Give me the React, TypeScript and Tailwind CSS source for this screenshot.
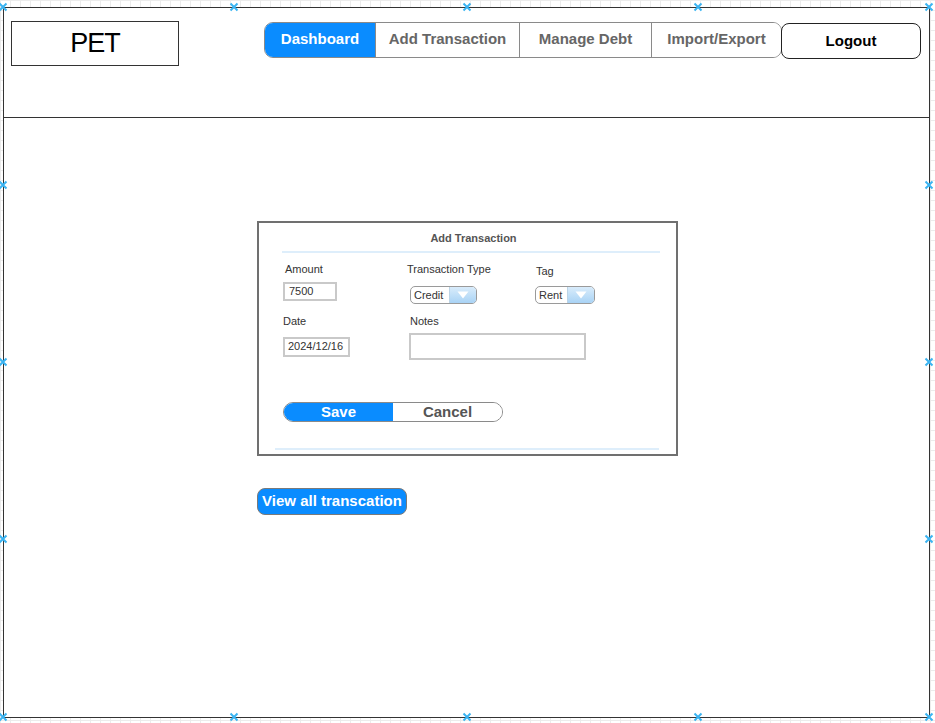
import React from "react";

const navItems = ["Dashboard", "Add Transaction", "Manage Debt", "Import/Export"];
const navWidths = ["w-[110px]", "w-[144px]", "w-[132px]", "w-[130px]"];

const markers = [
  [3, 7], [234, 7], [467, 7], [698, 7], [929, 7],
  [3, 717], [234, 717], [467, 717], [698, 717], [929, 717],
  [3, 185], [3, 362], [3, 539],
  [929, 185], [929, 362], [929, 539],
];

function Marker({ x, y }: { x: number; y: number }) {
  return (
    <svg
      className="absolute"
      style={{ left: x - 5, top: y - 5 }}
      width="10"
      height="10"
      viewBox="0 0 10 10"
    >
      <path d="M1.5 1.5L8.5 8.5M8.5 1.5L1.5 8.5" stroke="#3ab4f2" strokeWidth="2" />
    </svg>
  );
}

function Select({ label, textW }: { label: string; textW: string }) {
  return (
    <div className="flex h-[18px] rounded-[5px] border border-[#9a9a9a] overflow-hidden bg-white">
      <div className={`${textW} flex items-center pl-[3px] text-[11px] text-[#333]`}>{label}</div>
      <div className="w-[27px] border-l border-[#bcd4e6] bg-[linear-gradient(to_bottom,#d9ecfb,#a9d3f5)] flex items-center justify-center">
        <svg width="12" height="8" viewBox="0 0 12 8">
          <path d="M0.5 0.5H11.5L6 7.5Z" fill="#ffffff" />
        </svg>
      </div>
    </div>
  );
}

export default function App() {
  return (
    <div
      className="relative w-[935px] h-[723px] pt-[7px] pl-[3px] bg-white bg-[linear-gradient(to_right,#ececec_1px,transparent_1px),linear-gradient(to_bottom,#ececec_1px,transparent_1px)] bg-[size:10px_10px]"
      style={{ fontFamily: '"Liberation Sans", Arial, sans-serif' }}
    >
      <div className="w-[927px] h-[711px] border border-[#333] bg-white flex flex-col">
        {/* header */}
        <div className="h-[110px] border-b border-[#333] flex items-start">
          <div className="ml-[7px] mt-[13px] w-[168px] h-[45px] border border-[#333] flex items-center justify-center text-[27px] tracking-[-1px] text-black">
            PET
          </div>

          <div className="ml-[85px] mt-[14px] flex h-[36px] rounded-[9px] border border-[#8a8a8a] overflow-hidden">
            {navItems.map((item, i) => (
              <div
                key={item}
                className={`${navWidths[i]} flex items-start justify-center pt-[5px] text-[15px] font-bold ${
                  i === 0 ? "bg-[#0a8cff] text-white" : "bg-white text-[#666] border-l border-[#8a8a8a]"
                }`}
              >
                {item}
              </div>
            ))}
          </div>

          <div className="ml-[-1px] mt-[15px] w-[140px] h-[36px] rounded-[8px] border border-[#222] flex items-start justify-center pt-[6px] text-[15px] font-bold text-black">
            Logout
          </div>
        </div>

        {/* body */}
        <div className="pl-[253px] pt-[103px]">
          <div className="w-[421px] h-[235px] border-2 border-[#707070] bg-white flex flex-col">
            <div className="pt-[9px] pl-[12px] text-center text-[11px] font-bold text-[#555] leading-[13px]">
              Add Transaction
            </div>
            <div className="ml-[23px] mt-[6px] w-[378px] h-[2px] bg-[#deeefb]" />

            <div className="flex mt-[10px] ml-[24px] text-[11px] text-[#333] leading-[13px]">
              <div className="w-[124px] flex flex-col">
                <span className="ml-[2px]">Amount</span>
                <div className="mt-[6px] w-[54px] h-[19px] border-2 border-[#c9c9c9] pl-[4px] text-[11px] leading-[14px] text-[#333]">
                  7500
                </div>
              </div>
              <div className="w-[128px] flex flex-col">
                <span>Transaction Type</span>
                <div className="mt-[10px] ml-[3px] w-[67px]">
                  <Select label="Credit" textW="w-[38px]" />
                </div>
              </div>
              <div className="flex flex-col">
                <span className="mt-[2px] ml-[1px]">Tag</span>
                <div className="mt-[8px] w-[60px]">
                  <Select label="Rent" textW="w-[31px]" />
                </div>
              </div>
            </div>

            <div className="flex mt-[11px] ml-[24px] text-[11px] text-[#333] leading-[13px]">
              <div className="w-[126px] flex flex-col">
                <span>Date</span>
                <div className="mt-[9px] w-[67px] h-[20px] border-2 border-[#c9c9c9] pl-[3px] text-[11px] leading-[15px] text-[#333]">
                  2024/12/16
                </div>
              </div>
              <div className="flex flex-col">
                <span className="ml-[1px]">Notes</span>
                <div className="mt-[5px] w-[177px] h-[27px] border-2 border-[#c9c9c9]" />
              </div>
            </div>

            <div className="ml-[24px] mt-[42px] flex w-[220px] h-[20px] rounded-full border border-[#8a8a8a] overflow-hidden text-[15px] font-bold leading-[18px]">
              <div className="w-[109px] bg-[#0a8cff] text-white text-center">Save</div>
              <div className="flex-1 bg-white text-[#555] text-center">Cancel</div>
            </div>

            <div className="ml-[16px] mt-[26px] w-[384px] h-[2px] bg-[#deeefb]" />
          </div>

          <div className="mt-[32px] w-[150px] h-[27px] rounded-[8px] border border-[#7a7a7a] bg-[#0a8cff] text-white text-[15px] font-bold flex items-center justify-center">
            View all transcation
          </div>
        </div>
      </div>

      {markers.map(([x, y], i) => (
        <Marker key={i} x={x} y={y} />
      ))}
    </div>
  );
}
